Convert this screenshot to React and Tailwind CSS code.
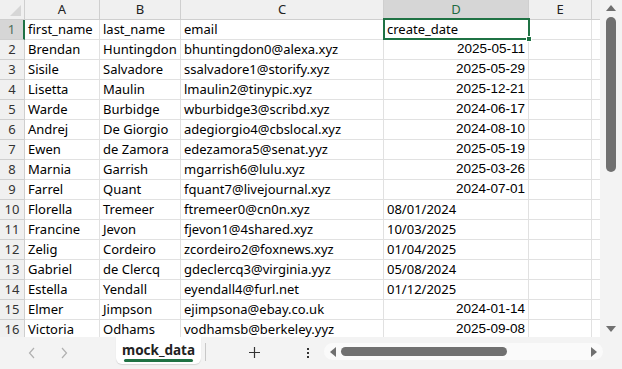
import React from "react";

const rows = [
  ["first_name", "last_name", "email", "create_date", "l"],
  ["Brendan", "Huntingdon", "bhuntingdon0@alexa.xyz", "2025-05-11", "r"],
  ["Sisile", "Salvadore", "ssalvadore1@storify.xyz", "2025-05-29", "r"],
  ["Lisetta", "Maulin", "lmaulin2@tinypic.xyz", "2025-12-21", "r"],
  ["Warde", "Burbidge", "wburbidge3@scribd.xyz", "2024-06-17", "r"],
  ["Andrej", "De Giorgio", "adegiorgio4@cbslocal.xyz", "2024-08-10", "r"],
  ["Ewen", "de Zamora", "edezamora5@senat.yyz", "2025-05-19", "r"],
  ["Marnia", "Garrish", "mgarrish6@lulu.xyz", "2025-03-26", "r"],
  ["Farrel", "Quant", "fquant7@livejournal.xyz", "2024-07-01", "r"],
  ["Florella", "Tremeer", "ftremeer0@cn0n.xyz", "08/01/2024", "l"],
  ["Francine", "Jevon", "fjevon1@4shared.xyz", "10/03/2025", "l"],
  ["Zelig", "Cordeiro", "zcordeiro2@foxnews.xyz", "01/04/2025", "l"],
  ["Gabriel", "de Clercq", "gdeclercq3@virginia.yyz", "05/08/2024", "l"],
  ["Estella", "Yendall", "eyendall4@furl.net", "01/12/2025", "l"],
  ["Elmer", "Jimpson", "ejimpsona@ebay.co.uk", "2024-01-14", "r"],
  ["Victoria", "Odhams", "vodhamsb@berkeley.yyz", "2025-09-08", "r"],
];

const cols = ["A", "B", "C", "D", "E"];
const cell = "h-5 border-r border-b border-[#e1e1e1] px-[3px] flex items-center overflow-hidden whitespace-nowrap";

function App() {
  return (
    <div className="w-[622px] h-[369px] bg-[#f3f3f3] flex flex-col overflow-hidden text-black" style={{ fontFamily: "'Noto Sans', sans-serif" }}>
      <div className="flex h-[337px] overflow-hidden">
        {/* grid */}
        <div className="w-[600px] h-[337px] overflow-hidden bg-white relative">
          <div className="grid grid-cols-[25px_75px_81px_203px_145px_63px_8px] auto-rows-[20px] text-[13px]">
            {/* header row */}
            <div className="h-5 bg-[#f0f0f0] border-r border-b border-[#cfcfcf] relative">
              <div className="absolute right-[3px] bottom-[3px] w-0 h-0 border-l-[11px] border-l-transparent border-b-[11px] border-b-[#d6d6d6]" />
            </div>
            {cols.map((c) => (
              <div
                key={c}
                className={
                  "h-5 border-r border-b border-[#cfcfcf] flex items-center justify-center text-[13px] " +
                  (c === "D" ? "bg-[#d6d6d6] text-[#1e6b41]" : "bg-[#f0f0f0] text-[#222]")
                }
              >
                {c}
              </div>
            ))}
            <div className="h-5 bg-[#f0f0f0] border-b border-[#cfcfcf]" />

            {rows.map((r, i) => (
              <React.Fragment key={i}>
                <div
                  className={
                    "h-5 border-b border-[#cfcfcf] flex items-center justify-center text-[13px] " +
                    (i === 0
                      ? "bg-[#d6d6d6] text-[#4b6e5a] border-r-2 border-r-[#1f7244]"
                      : "bg-[#f0f0f0] text-[#333] border-r border-r-[#cfcfcf]")
                  }
                >
                  {i + 1}
                </div>
                <div className={cell}>{r[0]}</div>
                <div className={cell}>{r[1]}</div>
                <div className={cell}>{r[2]}</div>
                <div
                  className={
                    cell +
                    (r[4] === "r"
                      ? " justify-end text-[13.5px] font-['Liberation_Sans',sans-serif]"
                      : "")
                  }
                >
                  {r[3]}
                </div>
                <div className={cell} />
                <div className="h-5 border-b border-[#e1e1e1]" />
              </React.Fragment>
            ))}
          </div>
          {/* selected cell D1 */}
          <div className="absolute left-[383px] top-[18px] w-[147px] h-[22px] border-2 border-[#1f7244] pointer-events-none" />
          <div className="absolute left-[526px] top-[36px] w-[6px] h-[6px] bg-[#1f7244] border border-white" />
        </div>

        {/* vertical scrollbar */}
        <div className="w-[22px] flex flex-col items-center bg-[#f3f3f3] pt-[5px]">
          <div className="w-0 h-0 border-l-[5px] border-l-transparent border-r-[5px] border-r-transparent border-b-[6px] border-b-[#707070]" />
          <div className="w-[10px] h-[155px] mt-[6px] rounded-full bg-[#707070]" />
          <div className="flex-1" />
          <div className="w-0 h-0 mb-[5px] border-l-[5px] border-l-transparent border-r-[5px] border-r-transparent border-t-[6px] border-t-[#707070]" />
        </div>
      </div>

      {/* tab bar */}
      <div className="flex-1 flex items-start">
        <div className="w-[116px] flex items-center pt-[10px]">
          <svg className="ml-[28px]" width="8" height="12" viewBox="0 0 8 12">
            <path d="M6 1L1.5 6L6 11" fill="none" stroke="#b0b0b0" strokeWidth="1.2" />
          </svg>
          <svg className="ml-[24px]" width="8" height="12" viewBox="0 0 8 12">
            <path d="M2 1L6.5 6L2 11" fill="none" stroke="#b0b0b0" strokeWidth="1.2" />
          </svg>
        </div>
        <div className="w-[85px] h-[27px] bg-white rounded-b-[6px] flex flex-col items-center justify-end pb-[2px] shadow-[0_1px_1px_rgba(0,0,0,0.12)]">
          <span className="text-[13.5px] font-bold text-[#222] leading-none">mock_data</span>
          <div className="w-[69px] h-[3px] bg-[#1f7244] rounded-full mt-[2px]" />
        </div>
        <div className="w-px h-[18px] bg-[#c8c8c8] ml-[4px] mt-[6px]" />
        <div className="ml-[42px] flex justify-center pt-[9px]">
          <svg width="13" height="13" viewBox="0 0 13 13">
            <path d="M6.5 1v11M1 6.5h11" stroke="#333" strokeWidth="1.2" />
          </svg>
        </div>
        <div className="ml-[46px] pt-[11px] flex flex-col gap-[2px] items-center w-[2px]">
          <div className="w-[2px] h-[2px] bg-[#333]" />
          <div className="w-[2px] h-[2px] bg-[#333]" />
          <div className="w-[2px] h-[2px] bg-[#333]" />
        </div>
        <div className="ml-[15px] mt-[6px] w-[279px] h-[17px] rounded-full bg-[#fafafa] flex items-center pl-[6px] pr-[6px]">
          <div className="w-0 h-0 border-t-[5px] border-t-transparent border-b-[5px] border-b-transparent border-r-[6px] border-r-[#707070]" />
          <div className="ml-[5px] w-[166px] h-[9px] rounded-full bg-[#707070]" />
          <div className="flex-1" />
          <div className="w-0 h-0 border-t-[5px] border-t-transparent border-b-[5px] border-b-transparent border-l-[6px] border-l-[#707070]" />
        </div>
      </div>
    </div>
  );
}

export default App;
